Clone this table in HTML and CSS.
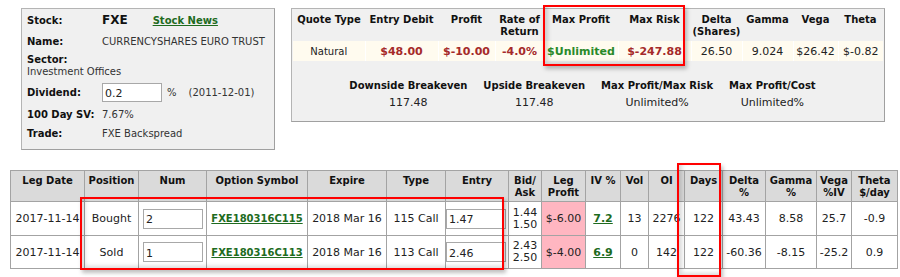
FILE: index.html
```html
<!DOCTYPE html>
<html>
<head>
<meta charset="utf-8">
<link rel="stylesheet" href="styles.css">
</head>
<body>
<div class="page">
  <div class="top">
    <div class="stock-box">
      <div class="srow r1"><span class="lbl">Stock:</span><span class="val"><span class="sym">FXE</span><a class="news" href="#">Stock News</a></span></div>
      <div class="srow r2"><span class="lbl">Name:</span><span class="val">CURRENCYSHARES EURO TRUST</span></div>
      <div class="sector"><div class="lbl">Sector:</div><div class="val">Investment Offices</div></div>
      <div class="srow r4"><span class="lbl">Dividend:</span><span class="val"><input class="div-in" type="text" value="0.2"><span class="pct">%</span><span class="date">(2011-12-01)</span></span></div>
      <div class="srow r5"><span class="lbl">100 Day SV:</span><span class="val">7.67%</span></div>
      <div class="srow r6"><span class="lbl">Trade:</span><span class="val">FXE Backspread</span></div>
    </div>
    <div class="quote-box">
      <table class="quote">
        <colgroup>
          <col style="width:72px"><col style="width:73px"><col style="width:57px"><col style="width:49px"><col style="width:74px"><col style="width:73px"><col style="width:51px"><col style="width:51px"><col style="width:45px"><col style="width:45px">
        </colgroup>
        <tr class="qh">
          <th>Quote Type</th><th>Entry Debit</th><th>Profit</th><th>Rate of Return</th><th>Max Profit</th><th>Max Risk</th><th>Delta (Shares)</th><th>Gamma</th><th>Vega</th><th>Theta</th>
        </tr>
        <tr class="qd">
          <td class="nat">Natural</td><td class="neg">$48.00</td><td class="neg">$-10.00</td><td class="neg">-4.0%</td><td class="pos">$Unlimited</td><td class="neg">$-247.88</td><td>26.50</td><td>9.024</td><td>$26.42</td><td>$-0.82</td>
        </tr>
      </table>
      <table class="be">
        <tr><th>Downside Breakeven</th><th>Upside Breakeven</th><th>Max Profit/Max Risk</th><th>Max Profit/Cost</th></tr>
        <tr><td>117.48</td><td>117.48</td><td>Unlimited%</td><td>Unlimited%</td></tr>
      </table>
    </div>
  </div>

  <table class="legs">
    <colgroup>
      <col style="width:74px"><col style="width:54px"><col style="width:68px"><col style="width:101px"><col style="width:79px"><col style="width:59px"><col style="width:63px"><col style="width:33px"><col style="width:44px"><col style="width:35px"><col style="width:28px"><col style="width:36px"><col style="width:38px"><col style="width:43px"><col style="width:51px"><col style="width:35px"><col style="width:46px">
    </colgroup>
    <tr class="lh">
      <th>Leg Date</th><th>Position</th><th>Num</th><th>Option Symbol</th><th>Expire</th><th>Type</th><th>Entry</th><th>Bid/<br>Ask</th><th>Leg<br>Profit</th><th>IV %</th><th>Vol</th><th>OI</th><th>Days</th><th>Delta<br>%</th><th>Gamma<br>%</th><th>Vega<br>%IV</th><th>Theta<br>$/day</th>
    </tr>
    <tr class="ld r-a">
      <td>2017-11-14</td><td>Bought</td><td class="inp"><input class="cell-in" type="text" value="2"></td><td><a class="sym-link" href="#">FXE180316C115</a></td><td>2018 Mar 16</td><td>115 Call</td><td class="inp"><input class="cell-in" type="text" value="1.47"></td><td class="ba">1.44<br>1.50</td><td class="lp">$-6.00</td><td><a class="iv" href="#">7.2</a></td><td>13</td><td>2276</td><td>122</td><td>43.43</td><td>8.58</td><td>25.7</td><td>-0.9</td>
    </tr>
    <tr class="ld r-b">
      <td>2017-11-14</td><td>Sold</td><td class="inp"><input class="cell-in" type="text" value="1"></td><td><a class="sym-link" href="#">FXE180316C113</a></td><td>2018 Mar 16</td><td>113 Call</td><td class="inp"><input class="cell-in" type="text" value="2.46"></td><td class="ba">2.43<br>2.50</td><td class="lp">$-4.00</td><td><a class="iv" href="#">6.9</a></td><td>0</td><td>142</td><td>122</td><td>-60.36</td><td>-8.15</td><td>-25.2</td><td>0.9</td>
    </tr>
  </table>

  <div class="mark mark-max"></div>
  <div class="mark mark-legs"></div>
  <div class="mark mark-days"></div>
</div>
</body>
</html>
```

FILE: styles.css
```css
* { box-sizing: border-box; }
html, body { margin: 0; padding: 0; background: #fff; }
body {
  font-family: "DejaVu Sans", Verdana, sans-serif;
  font-size: 11px;
  color: #222;
  width: 900px;
  height: 277px;
  overflow: hidden;
}
.page { position: relative; width: 900px; height: 277px; }

.top {
  display: flex;
  align-items: flex-start;
  gap: 16px;
  padding: 8px 0 0 21px;
}

/* Stock box */
.stock-box {
  width: 254px;
  height: 142px;
  background: #f0f0f0;
  border: 1px solid #b4b4b4;
  border-right-color: #a0a0a0;
  border-bottom-color: #a0a0a0;
  padding: 0 0 0 5px;
}
.srow { display: flex; align-items: center; }
.srow .lbl { width: 75px; flex: none; }
.lbl { font-weight: bold; font-size: 10px; color: #111; }
.val { font-size: 10px; color: #333; display: flex; align-items: center; }
.r1 { height: 22px; }
.r2 { height: 20px; }
.sector { height: 29px; padding-top: 3px; line-height: 12px; }
.sector .val { display: block; }
.r4 { height: 25px; }
.r5 { height: 19px; }
.r6 { height: 18px; }
.sym { font-weight: bold; font-size: 12px; color: #111; }
.news {
  margin-left: 25px;
  font-weight: bold;
  font-size: 10px;
  color: #1e6b1e;
  text-decoration: underline;
}
.div-in {
  width: 60px;
  height: 19px;
  border: 1px solid #a8a8a8;
  background: #fff;
  font-family: "DejaVu Sans", Verdana, sans-serif;
  font-size: 11px;
  color: #222;
  padding: 2px 2px 0 2px;
  margin: 0;
}
.pct { margin-left: 5px; }
.date { margin-left: 12px; }

/* Quote box */
.quote-box {
  width: 594px;
  height: 114px;
  background: #f0f0f0;
  border: 1px solid #b4b4b4;
  border-right-color: #a0a0a0;
  border-bottom-color: #a0a0a0;
  padding: 0 0 0 1px;
}
.quote {
  table-layout: fixed;
  width: 590px;
  border-collapse: collapse;
}
.quote th {
  height: 32px;
  vertical-align: top;
  padding: 5px 1px 0;
  line-height: 12px;
  font-size: 10px;
  font-weight: bold;
  color: #111;
  text-align: center;
}
.quote td {
  height: 20px;
  background: #fffbef;
  border-left: 1px solid #fff;
  text-align: center;
  padding: 0;
  white-space: nowrap;
  color: #222;
}
.quote td:first-child { border-left: 0; }
.quote td.nat { font-size: 10px; }
.quote td.neg { color: #a52a2a; font-weight: bold; }
.quote td.pos { color: #2a8a2a; font-weight: bold; }

.be {
  border-collapse: collapse;
  margin: 18px auto 0;
  position: relative;
  left: -6px;
}
.be th {
  font-size: 10px;
  font-weight: bold;
  color: #111;
  padding: 0 8px;
  line-height: 13px;
}
.be td {
  text-align: center;
  padding: 4px 0 0;
  line-height: 13px;
  color: #222;
}

/* Legs table */
.legs {
  table-layout: fixed;
  width: 888px;
  border-collapse: collapse;
  margin: 20px 0 0 10px;
}
.legs th, .legs td {
  border: 1px solid #a3a3a3;
  text-align: center;
  white-space: nowrap;
  padding: 0 1px;
}
.lh th {
  background: #dadada;
  height: 31px;
  vertical-align: top;
  padding-top: 4px;
  line-height: 12px;
  font-size: 10px;
  font-weight: bold;
  color: #111;
}
.ld td { background: #fff; color: #222; }
.r-a td { height: 34px; }
.r-b td { height: 33px; }
.legs td.inp { text-align: left; padding: 0 0 0 4px; }
.legs td.inp:nth-child(7) { padding-left: 0; overflow: visible; }
.cell-in {
  width: 60px;
  height: 20px;
  border: 1px solid #a8a8a8;
  background: #fff;
  font-family: "DejaVu Sans", Verdana, sans-serif;
  font-size: 11px;
  color: #222;
  padding: 2px 2px 0 2px;
  margin: 0;
  vertical-align: middle;
}
.legs td.ba { line-height: 12px; padding: 0; }
.legs td.lp { background: #ffb6c1; }
.sym-link {
  font-weight: bold;
  font-size: 10px;
  color: #1e6b1e;
  text-decoration: underline;
}
.iv {
  font-weight: bold;
  color: #1e6b1e;
  text-decoration: underline;
}

/* annotation marks */
.mark {
  position: absolute;
  border: 2px solid #f00;
  box-shadow: 2px 3px 4px rgba(0,0,0,0.25), inset 3px -2px 4px rgba(0,0,0,0.15);
  pointer-events: none;
}
.mark-max { left: 543px; top: 5px; width: 142px; height: 61px; }
.mark-legs { left: 80px; top: 197px; width: 424px; height: 73px; }
.mark-days { left: 677px; top: 163px; width: 44px; height: 114px; }
```
